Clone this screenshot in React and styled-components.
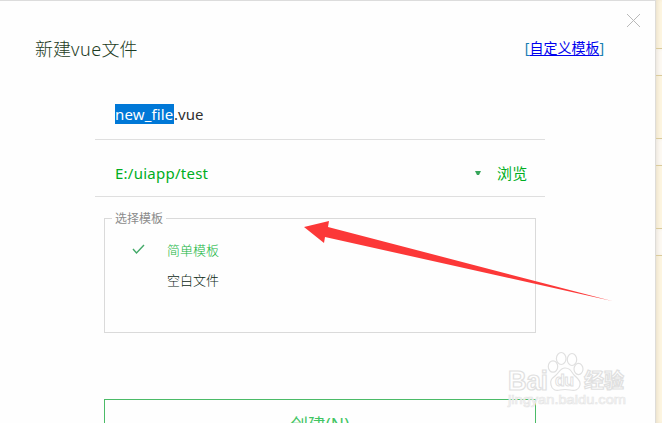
import React from "react";
import styled, { createGlobalStyle } from "styled-components";

const GlobalStyle = createGlobalStyle`
  * { box-sizing: border-box; }
  body {
    margin: 0;
    overflow: hidden;
    background: #fff;
    font-family: "Noto Sans", "Noto Sans CJK SC", sans-serif;
  }
`;

const Page = styled.div`
  position: relative;
  display: flex;
  width: 662px;
  height: 423px;
  overflow: hidden;
`;

const Dialog = styled.main`
  width: 656px;
  height: 423px;
  flex: none;
  background: #fefefe;
  border-top: 1px solid #dcdcdc;
  border-right: 1px solid #dedcd8;
`;

const Backdrop = styled.aside`
  flex: 1;
  display: flex;
  flex-direction: column;
  background: #fdf5e0;
  box-shadow: inset 3px 0 4px -2px rgba(90, 80, 60, 0.14);
`;

const Band = styled.div`
  height: 28px;
  margin-top: ${(p) => p.$gap}px;
  border: solid #dacb9c;
  border-width: 1px 0;
  background: #fdf9f2;
  box-shadow: inset 3px 0 4px -2px rgba(90, 80, 60, 0.14);
`;

const CloseRow = styled.div`
  display: flex;
  justify-content: flex-end;
  height: 36px;
  padding: 13px 15px 0 0;
`;

const Close = styled.svg`
  width: 13px;
  height: 13px;
`;

const Header = styled.header`
  display: flex;
  justify-content: space-between;
  height: 66px;
  padding: 0 51px 0 35px;
`;

const Title = styled.h1`
  margin: 0;
  font-size: 18px;
  font-weight: 300;
  line-height: 24px;
  color: #1d3c24;

  span { letter-spacing: 0.5px; }
`;

const CustomLink = styled.span`
  font-size: 14px;
  line-height: 22px;
  color: #167fb0;
  white-space: nowrap;

  a { color: #0000ee; text-underline-offset: 2px; }
`;

const Field = styled.div`
  display: flex;
  align-items: center;
  width: 450px;
  height: ${(p) => p.$height}px;
  margin-left: 95px;
  padding: ${(p) => p.$top}px 17px ${(p) => p.$bottom}px 20px;
  border-bottom: 1px solid #dfdfdf;
  font-size: 15px;
  line-height: 20px;
  color: ${(p) => p.$color};
`;

const Selected = styled.span`
  width: 59px;
  height: 20px;
  background: #0078d7;
  color: #fff;
  letter-spacing: 0.15px;
`;

const Path = styled.span`
  flex: 1;
  letter-spacing: 0.25px;
`;

const Caret = styled.svg`
  width: 6px;
  height: 4px;
  margin-right: 16px;
`;

const Browse = styled.span`
  width: 31px;
  letter-spacing: 0.3px;
`;

const Templates = styled.fieldset`
  width: 432px;
  height: 122px;
  margin: 14px 0 0 104px;
  padding: 8px 0 0 27px;
  border: 1px solid #dadada;
`;

const Legend = styled.legend`
  height: 15px;
  margin-left: -20px;
  padding: 0 3px;
  font-size: 12px;
  line-height: 15px;
  color: #8b8b8b;
`;

const Option = styled.div`
  display: flex;
  align-items: center;
  height: 30px;
  font-size: 13px;
  font-weight: 300;
  color: ${(p) => p.$color};
`;

const Mark = styled.svg`
  width: 13px;
  height: 11px;
  margin-right: 22px;
`;

const Create = styled.button`
  display: block;
  width: 432px;
  height: 50px;
  margin: 66px 0 0 104px;
  padding: 0;
  border: 1px solid #4bbb67;
  background: transparent;
  color: #42c563;
  font: 17.5px/48px "Noto Sans", "Noto Sans CJK SC", sans-serif;
`;

const Overlay = styled.svg`
  position: absolute;
  inset: 0;
  width: 662px;
  height: 423px;
  pointer-events: none;
`;

function Watermark() {
  return (
    <g stroke="#e0e0e0" strokeWidth="1.2" fill="#fff" fillOpacity="0.9" fontFamily="Liberation Sans, Noto Sans CJK SC, sans-serif" fontWeight="700">
      <text x="508" y="389.5" fontSize="27" textLength="40" lengthAdjust="spacingAndGlyphs">Bai</text>
      <ellipse cx="553" cy="366.5" rx="4.7" ry="5.7" />
      <ellipse cx="561.2" cy="358.5" rx="4.8" ry="6" />
      <ellipse cx="572" cy="359.5" rx="4.7" ry="6" />
      <ellipse cx="578.5" cy="369" rx="4.5" ry="5.6" />
      <path d="M565 368 C560 368 559 373 555 376 C551 379 550 381 551 385 C552 390 556 391 560 390 Q565 389 570 390 C575 391 579 390 580 385 C581 380 577 378 574 375 C571 371 570 368 565 368Z" />
      <text x="555" y="386" fontSize="16" strokeWidth="0.9" textLength="19">du</text>
      <text x="584" y="388" fontSize="20" textLength="40">经验</text>
      <text x="508" y="404" fontSize="13" fontWeight="400" stroke="#e6e6e6" strokeWidth="0.7" textLength="118" lengthAdjust="spacingAndGlyphs">jingyan.baidu.com</text>
    </g>
  );
}

export default function App() {
  return (
    <>
      <GlobalStyle />
      <Page>
        <Dialog>
          <CloseRow>
            <Close viewBox="0 0 13 13" stroke="#b9b9b9" fill="none">
              <path d="M0 0L13 13M13 0L0 13" />
            </Close>
          </CloseRow>
          <Header>
            <Title>新建<span>vue</span>文件</Title>
            <CustomLink>[<a href="#templates">自定义模板</a>]</CustomLink>
          </Header>
          <Field $height={37} $top={0} $bottom={14} $color="#303030">
            <Selected>new_file</Selected>.vue
          </Field>
          <Field $height={57} $top={10} $bottom={0} $color="#00ae22">
            <Path>E:/uiapp/test</Path>
            <Caret viewBox="0 0 6 4"><path d="M0 0H6L4 4H2Z" fill="#36a55a" /></Caret>
            <Browse>浏览</Browse>
          </Field>
          <Templates id="templates">
            <Legend>选择模板</Legend>
            <Option $color="#12b53d">
              <Mark viewBox="0 0 13 11" fill="none" stroke="#42a968" strokeWidth="1.4"><path d="M1 5L4.5 9L12 1" /></Mark>
              简单模板
            </Option>
            <Option $color="#0c2814"><Mark />空白文件</Option>
          </Templates>
          <Create>创建(N)</Create>
        </Dialog>
        <Backdrop>
          <Band $gap={48} />
          <Band $gap={62} />
          <Band $gap={62} />
        </Backdrop>
        <Overlay viewBox="0 0 662 423">
          <path d="M304 227L329 221L328 227L612 301L325 237L324 243Z" fill="#fc3838" />
          <Watermark />
        </Overlay>
      </Page>
    </>
  );
}
